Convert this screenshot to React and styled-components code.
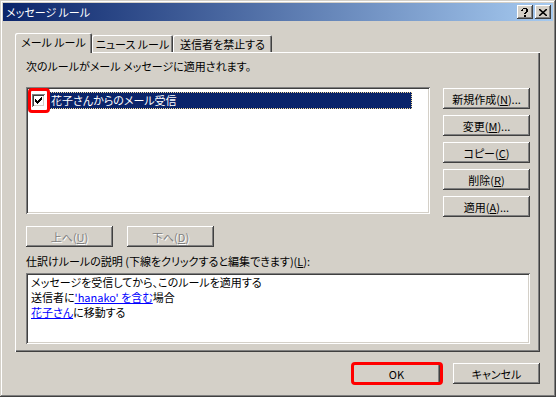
import React from "react";
import styled, { createGlobalStyle } from "styled-components";

const GlobalStyle = createGlobalStyle`
  html, body {
    margin: 0;
    padding: 0;
    background: #d4d0c8;
  }
  body {
    font-family: "Noto Sans CJK JP", "Noto Sans", sans-serif;
    font-size: 11px;
    font-feature-settings: "palt";
    color: #000;
  }
`;

// classic 3d edges
const raisedEdge =
  "inset -1px -1px #404040, inset 1px 1px #ffffff, inset -2px -2px #808080, inset 2px 2px #d4d0c8";
const sunkenEdge =
  "inset 1px 1px #808080, inset -1px -1px #ffffff, inset 2px 2px #404040, inset -2px -2px #d4d0c8";

const Window = styled.div`
  width: 556px;
  height: 397px;
  box-sizing: border-box;
  padding: 3px;
  background: #d4d0c8;
  box-shadow: inset -1px -1px #404040, inset 1px 1px #d4d0c8,
    inset -2px -2px #808080, inset 2px 2px #ffffff;
  display: flex;
  flex-direction: column;
`;

const TitleBar = styled.div`
  height: 18px;
  display: flex;
  align-items: center;
  padding: 0 2px 0 3px;
  background: linear-gradient(to right, #0a246a, #a6caf0);
`;

const TitleText = styled.div`
  flex: 1;
  color: #fff;
  line-height: 14px;
`;

const CaptionButton = styled.div`
  width: 16px;
  height: 14px;
  box-sizing: border-box;
  margin-left: ${(p) => p.$gap || 0}px;
  background: #d4d0c8;
  box-shadow: ${raisedEdge};
  display: flex;
  align-items: center;
  justify-content: center;
`;

const Content = styled.div`
  padding: 12px 13px 0 12px;
  display: flex;
  flex-direction: column;
`;

const TabRow = styled.div`
  height: 19px;
  display: flex;
  align-items: flex-end;
  position: relative;
  z-index: 1;
`;

const Tab = styled.div`
  width: ${(p) => p.$w}px;
  height: ${(p) => (p.$active ? 20 : 17)}px;
  margin-bottom: ${(p) => (p.$active ? -1 : 0)}px;
  box-sizing: border-box;
  background: #d4d0c8;
  border-radius: 2px 2px 0 0;
  box-shadow: inset 1px 1px #ffffff, inset -1px 0 #404040, inset -2px 0 #808080;
  display: flex;
  align-items: center;
  justify-content: center;
  padding-bottom: ${(p) => (p.$active ? 2 : 0)}px;
  line-height: 14px;
  white-space: nowrap;
`;

const Panel = styled.div`
  height: 300px;
  box-sizing: border-box;
  padding: 7px 10px 8px 11px;
  box-shadow: inset 1px 1px #ffffff, inset -1px -1px #404040,
    inset -2px -2px #808080;
  display: flex;
  flex-direction: column;
`;

const Label = styled.div`
  line-height: 14px;
  margin-top: ${(p) => p.$top || 0}px;
  white-space: nowrap;
`;

const ListRow = styled.div`
  margin-top: 14px;
  display: flex;
  gap: 13px;
`;

const ListBox = styled.div`
  position: relative;
  width: 404px;
  height: 127px;
  box-sizing: border-box;
  background: #fff;
  box-shadow: ${sunkenEdge};
  padding: 5px 0 0 6px;
`;

const ListItem = styled.div`
  display: flex;
  align-items: center;
  height: 17px;
`;

const CheckBox = styled.div`
  width: 13px;
  height: 13px;
  box-sizing: border-box;
  background: #fff;
  box-shadow: ${sunkenEdge};
  margin-right: 4px;
  display: flex;
  align-items: center;
  justify-content: center;
`;

const Selected = styled.div`
  width: 363px;
  height: 17px;
  box-sizing: border-box;
  background: #0a246a;
  color: #fff;
  outline: 1px dotted #f5db95;
  outline-offset: -1px;
  padding-left: 2px;
  line-height: 17px;
  white-space: nowrap;
`;

const Highlight = styled.div`
  position: absolute;
  left: ${(p) => p.$l}px;
  top: ${(p) => p.$t}px;
  right: ${(p) => (p.$r === undefined ? "auto" : `${p.$r}px`)};
  bottom: ${(p) => (p.$b === undefined ? "auto" : `${p.$b}px`)};
  width: ${(p) => (p.$w ? `${p.$w}px` : "auto")};
  height: ${(p) => (p.$h ? `${p.$h}px` : "auto")};
  box-sizing: border-box;
  border: 3px solid #ff0000;
  border-radius: 4px;
  pointer-events: none;
`;

const ButtonColumn = styled.div`
  margin-top: 1px;
  display: flex;
  flex-direction: column;
  gap: 6px;
`;

const Button = styled.div`
  width: ${(p) => p.$w || 87}px;
  height: 21px;
  box-sizing: border-box;
  background: #d4d0c8;
  box-shadow: ${raisedEdge};
  display: flex;
  align-items: center;
  justify-content: center;
  line-height: 14px;
  white-space: nowrap;
  color: ${(p) => (p.$disabled ? "#808080" : "#000")};
  text-shadow: ${(p) => (p.$disabled ? "1px 1px #ffffff" : "none")};
`;

const ButtonRow = styled.div`
  margin-top: ${(p) => p.$top || 0}px;
  display: flex;
  justify-content: ${(p) => p.$justify || "flex-start"};
  gap: ${(p) => p.$gap || 14}px;
`;

const OkWrap = styled.div`
  position: relative;
`;

const DescBox = styled.div`
  margin-top: 5px;
  height: 73px;
  box-sizing: border-box;
  background: #fff;
  box-shadow: ${sunkenEdge};
  padding: 2px 3px 0 5px;
  line-height: 15px;
`;

const Link = styled.span`
  color: #0000ff;
  text-decoration: underline;
`;

const CheckMark = () => (
  <svg width="9" height="9" viewBox="0 0 9 9">
    <path
      d="M1 3 L1 6 L3 8 L8 3 L8 0 L3 5 Z"
      fill="#000"
      shapeRendering="crispEdges"
    />
  </svg>
);

const App = () => {
  return (
    <>
      <GlobalStyle />
      <Window>
        <TitleBar>
          <TitleText>メッセージ ルール</TitleText>
          <CaptionButton>
            <svg width="8" height="9" viewBox="0 0 8 9">
              <path
                d="M1 1h1v-1h4v1h1v3h-1v1h-1v1h-2v-1h1v-1h1v-3h-3v2h-2z M3 7h2v2h-2z"
                fill="#000"
                shapeRendering="crispEdges"
              />
            </svg>
          </CaptionButton>
          <CaptionButton $gap={2}>
            <svg width="8" height="7" viewBox="0 0 8 7">
              <path
                d="M0 0 L8 7 M8 0 L0 7"
                stroke="#000"
                strokeWidth="1.6"
                fill="none"
              />
            </svg>
          </CaptionButton>
        </TitleBar>

        <Content>
          <TabRow>
            <Tab $w={77} $active>
              メール ルール
            </Tab>
            <Tab $w={81}>ニュース ルール</Tab>
            <Tab $w={99}>送信者を禁止する</Tab>
          </TabRow>

          <Panel>
            <Label>次のルールがメール メッセージに適用されます。</Label>

            <ListRow>
              <ListBox>
                <ListItem>
                  <CheckBox>
                    <CheckMark />
                  </CheckBox>
                  <Selected>花子さんからのメール受信</Selected>
                </ListItem>
                <Highlight $l={2} $t={1} $w={22} $h={25} />
              </ListBox>

              <ButtonColumn>
                <Button>
                  新規作成(<u>N</u>)...
                </Button>
                <Button>
                  変更(<u>M</u>)...
                </Button>
                <Button>
                  コピー(<u>C</u>)
                </Button>
                <Button>
                  削除(<u>R</u>)
                </Button>
                <Button>
                  適用(<u>A</u>)...
                </Button>
              </ButtonColumn>
            </ListRow>

            <ButtonRow $top={9}>
              <Button $disabled>
                上へ(<u>U</u>)
              </Button>
              <Button $disabled>
                下へ(<u>D</u>)
              </Button>
            </ButtonRow>

            <Label $top={7}>
              仕訳けルールの説明 (下線をクリックすると編集できます)(<u>L</u>):
            </Label>

            <DescBox>
              <div>メッセージを受信してから、このルールを適用する</div>
              <div>
                送信者に<Link>'hanako' を含む</Link>場合
              </div>
              <div>
                <Link>花子さん</Link>に移動する
              </div>
            </DescBox>
          </Panel>

          <ButtonRow $top={11} $justify="flex-end" $gap={13}>
            <OkWrap>
              <Button>OK</Button>
              <Highlight $l={-2} $t={-1} $r={-3} $b={-1} />
            </OkWrap>
            <Button>キャンセル</Button>
          </ButtonRow>
        </Content>
      </Window>
    </>
  );
};

export default App;
